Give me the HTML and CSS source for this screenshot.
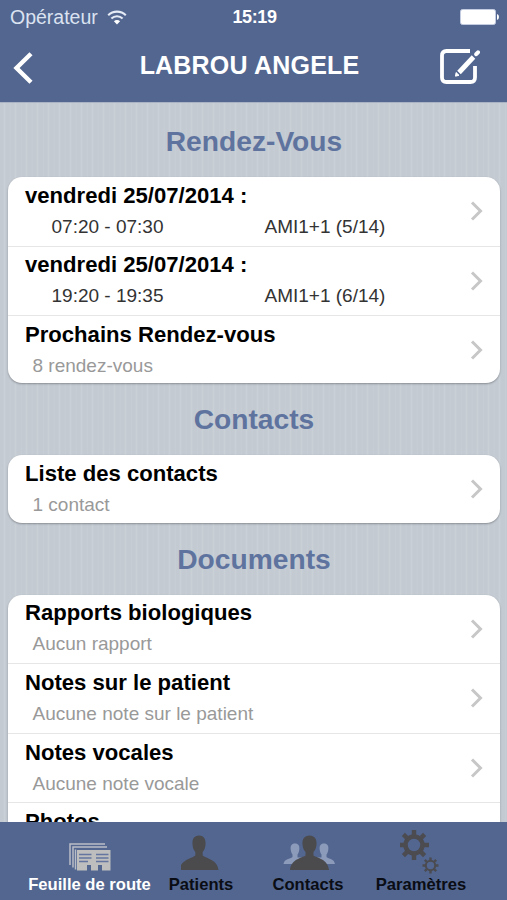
FILE: index.html
```html
<!DOCTYPE html>
<html lang="fr">
<head>
    <meta charset="UTF-8">
    <meta name="viewport" content="width=device-width, initial-scale=1.0">
    <title>LABROU ANGELE</title>
    <link rel="stylesheet" href="styles.css">
</head>
<body>
    <header>
        <div class="status-bar">
            <div class="carrier">
                <span>Opérateur</span>
                <svg class="wifi" viewBox="0 0 20 15" width="20" height="15">
                    <path d="M1.2 5.2a12.5 12.5 0 0 1 17.6 0M4.4 8.6a8 8 0 0 1 11.2 0" fill="none" stroke="#e6ebf6" stroke-width="2.1"/>
                    <path d="M6.9 11.2a4.4 4.4 0 0 1 6.2 0L10 14.4z" fill="#fff"/>
                </svg>
            </div>
            <span class="time">15:19</span>
            <svg class="battery" viewBox="0 0 39 16" width="39" height="16">
                <rect x="0.5" y="0.5" width="35" height="15" rx="2" fill="#fff" stroke="#c3cce0"/>
                <path d="M37 5q2 .6 2 3t-2 3z" fill="#fff"/>
            </svg>
        </div>
        <div class="nav-bar">
            <svg class="back" viewBox="0 0 20 32" width="20" height="32">
                <path d="M18 1.8L3.5 16 18 30.2" fill="none" stroke="#fff" stroke-width="4.4"/>
            </svg>
            <h1>LABROU ANGELE</h1>
            <svg class="edit" viewBox="0 0 40 36" width="40" height="36">
                <path d="M30 3H6.5Q2 3 2 7.5v22Q2 34 6.5 34h24q4.5 0 4.5-4.5V18" fill="none" stroke="#fff" stroke-width="3.8"/>
                <path d="M19 24.5L33.5 9" stroke="#fff" stroke-width="4.8"/>
                <path d="M36.2 6.2l1.8-1.9" stroke="#fff" stroke-width="4" stroke-linecap="round"/>
                <path d="M15.5 28.2l.6-3.7 2.9 2.8z" fill="#fff" stroke="#fff"/>
            </svg>
        </div>
    </header>

    <main>
        <h2>Rendez-Vous</h2>
        <ul class="card">
            <li>
                <h3>vendredi 25/07/2014 :</h3>
                <p class="slot"><span>07:20 - 07:30</span><span>AMI1+1 (5/14)</span></p>
                <svg class="chevron" viewBox="0 0 14 20"><path d="M2 1.5L10.5 10 2 18.5"/></svg>
            </li>
            <li>
                <h3>vendredi 25/07/2014 :</h3>
                <p class="slot"><span>19:20 - 19:35</span><span>AMI1+1 (6/14)</span></p>
                <svg class="chevron" viewBox="0 0 14 20"><path d="M2 1.5L10.5 10 2 18.5"/></svg>
            </li>
            <li>
                <h3>Prochains Rendez-vous</h3>
                <p>8 rendez-vous</p>
                <svg class="chevron" viewBox="0 0 14 20"><path d="M2 1.5L10.5 10 2 18.5"/></svg>
            </li>
        </ul>

        <h2>Contacts</h2>
        <ul class="card">
            <li>
                <h3>Liste des contacts</h3>
                <p>1 contact</p>
                <svg class="chevron" viewBox="0 0 14 20"><path d="M2 1.5L10.5 10 2 18.5"/></svg>
            </li>
        </ul>

        <h2>Documents</h2>
        <ul class="card">
            <li>
                <h3>Rapports biologiques</h3>
                <p>Aucun rapport</p>
                <svg class="chevron" viewBox="0 0 14 20"><path d="M2 1.5L10.5 10 2 18.5"/></svg>
            </li>
            <li>
                <h3>Notes sur le patient</h3>
                <p>Aucune note sur le patient</p>
                <svg class="chevron" viewBox="0 0 14 20"><path d="M2 1.5L10.5 10 2 18.5"/></svg>
            </li>
            <li>
                <h3>Notes vocales</h3>
                <p>Aucune note vocale</p>
                <svg class="chevron" viewBox="0 0 14 20"><path d="M2 1.5L10.5 10 2 18.5"/></svg>
            </li>
            <li>
                <h3>Photos</h3>
            </li>
        </ul>
    </main>

    <nav class="tab-bar">
        <a class="tab active">
            <svg viewBox="0 0 44 48" width="44" height="48">
                <path d="M2 39V18h35M5 41.5V21h34M7.5 43.5V23.5" fill="none" stroke="#b9bdc6" stroke-width="1.5"/>
                <path d="M9 24h33.500v20.500H34V39h-4v5.500h-7V39h-4v5.500H9z" fill="#bebebe"/>
                <path d="M11 28.500h12.500M11 32h12.500M11 35.500h9M28 28.500h12.500M28 32h12.500M28 35.500h12.500" stroke="#6476a0" stroke-width="1.400"/>
            </svg>
            <span>Feuille de route</span>
        </a>
        <a class="tab">
            <svg viewBox="2 0 40 48" width="40" height="48">
                <path d="M20 9.500c-4.700 0-7 3.500-6.500 9 .3 4 1.500 6 2.800 7.500v3.500C13 32.500 1.500 33.500.5 44h39C38.500 33.500 27 32.500 23.700 29.500V26c1.300-1.500 2.500-3.500 2.800-7.500.5-5.500-1.800-9-6.500-9z"/>
            </svg>
            <span>Patients</span>
        </a>
        <a class="tab">
            <svg viewBox="0 0 54 48" width="54" height="48">
                <path class="light" d="M14 17.5c-3.500 0-4.800 2.500-4.300 6 .3 2.500 1 4 1.800 5V31C9 33 3.500 32.500 2.500 38h23v-6.500h-9V28.500c.8-1 1.500-2.500 1.800-5 .5-3.500-.8-6-4.300-6z"/>
                <path class="light" d="M43 17.500c3.500 0 4.800 2.500 4.300 6-.3 2.500-1 4-1.800 5V31C48 33 53 32.500 54 38H31v-6.500h9.500V28.500c-.8-1-1.500-2.500-1.800-5-.5-3.500.8-6 4.300-6z"/>
                <path d="M28.500 9.500c-5 0-7.500 3.500-7 9 .3 4 1.700 6 3 7.500v3.500C21 32 10 33 9 44h39C47 33 36 32 32.500 29.500V26c1.300-1.500 2.700-3.500 3-7.500.5-5.500-2-9-7-9z"/>
            </svg>
            <span>Contacts</span>
        </a>
        <a class="tab">
            <svg viewBox="2 0 42 48" width="42" height="48">
                <g fill="none" stroke="#4b4b50">
                    <circle cx="16" cy="19" r="8.5" stroke-width="4.5"/>
                    <path d="M16 4v6M16 28v6M1 19h6M25 19h6M5.4 8.4l4.2 4.2M22.4 25.4l4.2 4.2M5.4 29.6l4.2-4.2M22.4 12.6l4.2-4.2" stroke-width="4.4"/>
                    <circle cx="32.5" cy="39.5" r="4.7" stroke-width="2"/>
                    <path d="M32.5 31.5v3M32.5 44.5v3M24.5 39.5h3M37.5 39.5h3M26.8 33.8l2.2 2.2M36 43l2.2 2.2M26.8 45.2l2.2-2.2M36 36l2.2-2.2" stroke-width="2.4"/>
                </g>
            </svg>
            <span>Paramètres</span>
        </a>
    </nav>
</body>
</html>
```

FILE: styles.css
```css
* {
    box-sizing: border-box;
    margin: 0;
    padding: 0;
}
body {
    display: flex;
    flex-direction: column;
    height: 900px;
    overflow: hidden;
    font-family: 'Liberation Sans', Arial, sans-serif;
    background-color: #c4cbd3;
}
header {
    flex: none;
    height: 102px;
    background-color: #526690;
    color: white;
}
.status-bar {
    display: grid;
    grid-template-columns: 1fr auto 1fr;
    align-items: center;
    height: 34px;
    padding: 0 8px 0 10px;
}
.carrier {
    display: flex;
    align-items: center;
    gap: 9px;
    font-size: 19.5px;
    color: #dbe2f0;
}
.time {
    font-size: 18px;
    font-weight: bold;
    letter-spacing: -0.4px;
}
.battery {
    justify-self: end;
}
.nav-bar {
    display: grid;
    grid-template-columns: 40px 1fr 40px;
    align-items: center;
    height: 64px;
    padding: 0 27px 0 13px;
}
h1 {
    padding: 0 0 2px 6px;
    font-size: 25px;
    line-height: 60px;
    letter-spacing: 0.2px;
    text-align: center;
    white-space: nowrap;
}
.back {
    margin-top: 4px;
}
main {
    flex: 1;
    min-height: 0;
    overflow: hidden;
    padding: 3px 7px 0 8px;
    border-top: 1px solid #a9b3c4;
    background: repeating-linear-gradient(90deg, #c3cad2 0 3px, #c9d0d6 4.5px, #c3cad2 6px 9px, #c6cdd4 11px);
}
h2 {
    height: 72px;
    line-height: 72px;
    font-size: 28.2px;
    text-align: center;
    color: #5f739f;
}
h2:first-child {
    height: 71px;
    line-height: 70px;
}
.card {
    list-style: none;
    background-color: white;
    border-radius: 14px;
    box-shadow: 0 1px 2px rgba(0, 0, 0, 0.3);
}
.card li {
    position: relative;
    height: 69.6px;
    padding: 5.8px 16px 0 17px;
    border-bottom: 1px solid #e6e6e6;
}
.card li:last-child {
    height: 67.2px;
    border-bottom: none;
}
h3 {
    font-size: 22.1px;
    line-height: 26px;
}
.card p {
    padding: 7px 0 0 7.5px;
    font-size: 19px;
    line-height: 22px;
    color: #999;
}
.card .slot {
    display: grid;
    grid-template-columns: 213px auto;
    padding-left: 26.5px;
    color: #333;
}
.chevron {
    position: absolute;
    top: 24px;
    right: 16px;
    width: 14px;
    height: 20px;
    fill: none;
    stroke: #c7c7c7;
    stroke-width: 3;
}
.tab-bar {
    display: grid;
    flex: none;
    grid-template-columns: 131px 92px 122px 104px;
    height: 78px;
    padding: 0 34px 0 24px;
    background-color: #526690;
}
.tab {
    display: flex;
    flex-direction: column;
    align-items: center;
    padding-top: 4px;
    font-size: 16.6px;
    font-weight: bold;
    line-height: 22px;
    white-space: nowrap;
    color: #0a0d14;
}
.tab svg {
    fill: #4b4b4d;
}
.tab .light {
    fill: #8d9bbb;
}
.tab.active {
    color: white;
}
```
